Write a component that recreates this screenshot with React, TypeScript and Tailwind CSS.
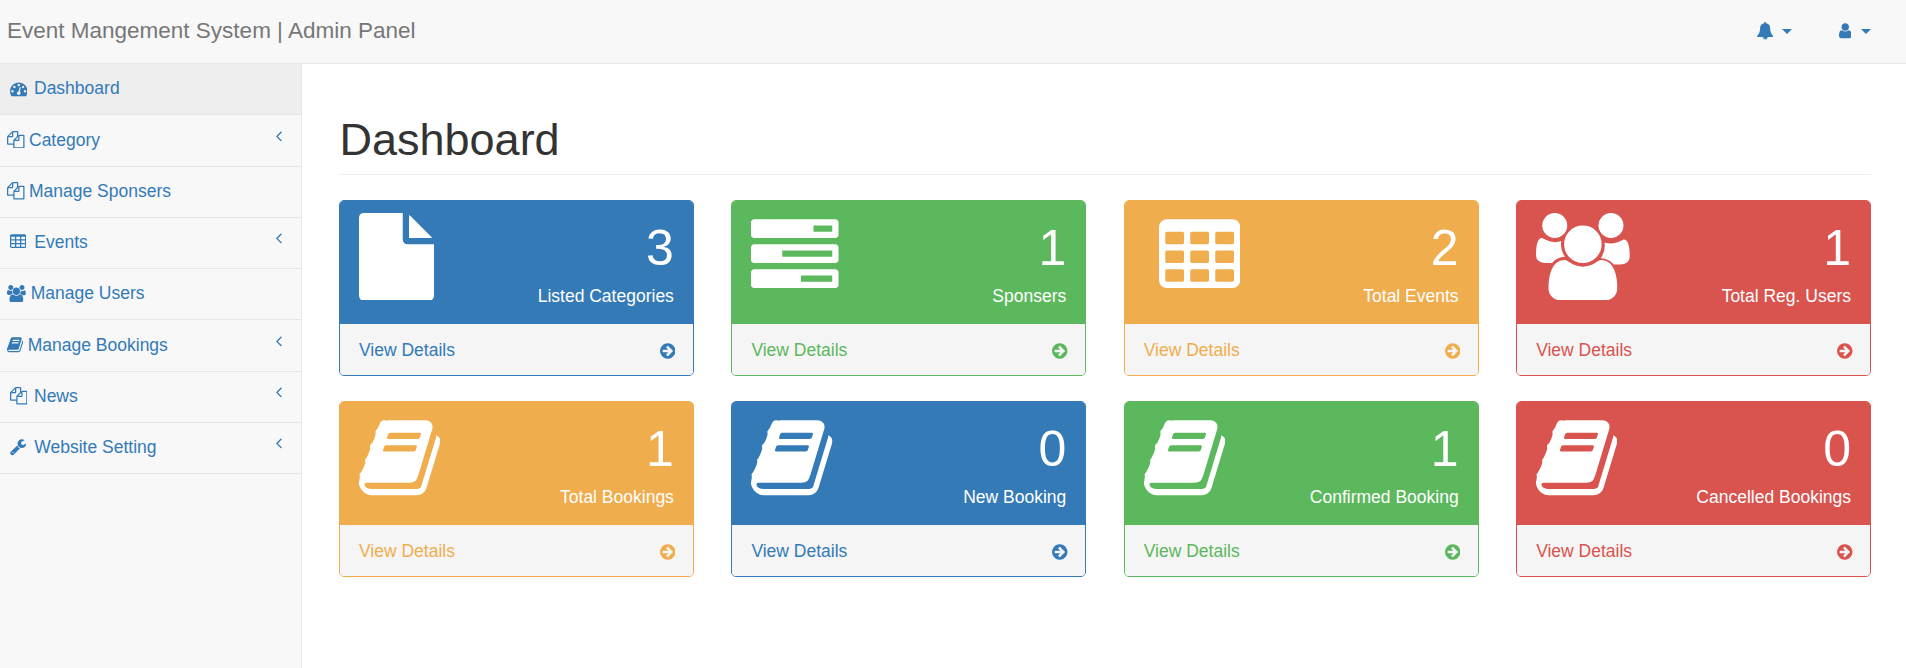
import type { ReactNode } from 'react'

// Font Awesome 4 glyphs, drawn inline because the icon packages only ship FA5+
const PATHS = {
  dashboard:
    'M384 1152q0-53-37.5-90.5t-90.5-37.5-90.5 37.5-37.5 90.5 37.5 90.5 90.5 37.5 90.5-37.5 37.5-90.5zm192-448q0-53-37.5-90.5t-90.5-37.5-90.5 37.5-37.5 90.5 37.5 90.5 90.5 37.5 90.5-37.5 37.5-90.5zm428 481l101-382q6-26-7.5-48.5t-38.5-29.5-48 6.5-30 39.5l-101 382q-60 5-107 43.5t-63 98.5q-20 77 20 146t117 89 146-20 89-117q16-60-6-117t-72-91zm660-33q0-53-37.5-90.5t-90.5-37.5-90.5 37.5-37.5 90.5 37.5 90.5 90.5 37.5 90.5-37.5 37.5-90.5zm-640-640q0-53-37.5-90.5t-90.5-37.5-90.5 37.5-37.5 90.5 37.5 90.5 90.5 37.5 90.5-37.5 37.5-90.5zm448 192q0-53-37.5-90.5t-90.5-37.5-90.5 37.5-37.5 90.5 37.5 90.5 90.5 37.5 90.5-37.5 37.5-90.5zm320 448q0 261-141 483-19 29-54 29h-1402q-35 0-54-29-141-221-141-483 0-182 71-348t191-286 286-191 348-71 348 71 286 191 191 286 71 348z',
  files:
    'M1696 384q40 0 68 28t28 68v1216q0 40-28 68t-68 28h-960q-40 0-68-28t-28-68v-288h-544q-40 0-68-28t-28-68v-672q0-40 20-88t48-76l408-408q28-28 76-48t88-20h416q40 0 68 28t28 68v328q68-40 128-40h416zm-544 213l-299 299h299v-299zm-640-384l-299 299h299v-299zm196 647l316-316v-416h-384v416q0 40-28 68t-68 28h-416v640h512v-256q0-40 20-92t48-80zm956 804v-1152h-384v416q0 40-28 68t-68 28h-416v640h896z',
  table:
    'M576 1376v-192q0-14-9-23t-23-9h-320q-14 0-23 9t-9 23v192q0 14 9 23t23 9h320q14 0 23-9t9-23zm0-384v-192q0-14-9-23t-23-9h-320q-14 0-23 9t-9 23v192q0 14 9 23t23 9h320q14 0 23-9t9-23zm512 384v-192q0-14-9-23t-23-9h-320q-14 0-23 9t-9 23v192q0 14 9 23t23 9h320q14 0 23-9t9-23zm-512-768v-192q0-14-9-23t-23-9h-320q-14 0-23 9t-9 23v192q0 14 9 23t23 9h320q14 0 23-9t9-23zm512 384v-192q0-14-9-23t-23-9h-320q-14 0-23 9t-9 23v192q0 14 9 23t23 9h320q14 0 23-9t9-23zm512 384v-192q0-14-9-23t-23-9h-320q-14 0-23 9t-9 23v192q0 14 9 23t23 9h320q14 0 23-9t9-23zm-512-768v-192q0-14-9-23t-23-9h-320q-14 0-23 9t-9 23v192q0 14 9 23t23 9h320q14 0 23-9t9-23zm512 384v-192q0-14-9-23t-23-9h-320q-14 0-23 9t-9 23v192q0 14 9 23t23 9h320q14 0 23-9t9-23zm0-384v-192q0-14-9-23t-23-9h-320q-14 0-23 9t-9 23v192q0 14 9 23t23 9h320q14 0 23-9t9-23zm128-320v1088q0 66-47 113t-113 47h-1344q-66 0-113-47t-47-113v-1088q0-66 47-113t113-47h1344q66 0 113 47t47 113z',
  users:
    'M593 896q-162 5-265 128h-134q-82 0-138-40.5t-56-118.5q0-353 124-353 6 0 43.5 21t97.5 42.5 119 21.5q67 0 133-23-5 37-5 66 0 139 81 256zm1071 637q0 120-73 189.5t-194 69.5h-874q-121 0-194-69.5t-73-189.5q0-53 3.5-103.5t14-109 26.5-108.5 43-97.5 62-81 85.5-53.5 111.5-20q10 0 43 21.5t73 48 107 48 135 21.5 135-21.5 107-48 73-48 43-21.5q61 0 111.5 20t85.5 53.5 62 81 43 97.5 26.5 108.5 14 109 3.5 103.5zm-1024-1277q0 106-75 181t-181 75-181-75-75-181 75-181 181-75 181 75 75 181zm704 384q0 159-112.5 271.5t-271.5 112.5-271.5-112.5-112.5-271.5 112.5-271.5 271.5-112.5 271.5 112.5 112.5 271.5zm576 254q0 78-56 118.5t-138 40.5h-134q-103-123-265-128 81-117 81-256 0-29-5-66 66 23 133 23 59 0 119-21.5t97.5-42.5 43.5-21q124 0 124 353zm-128-638q0 106-75 181t-181 75-181-75-75-181 75-181 181-75 181 75 75 181z',
  book:
    'M1703 478q40 57 18 129l-275 906q-19 64-76.5 107.5t-122.5 43.5h-923q-77 0-148.5-53.5t-99.5-131.5q-24-67-2-127 0-4 3-27t4-37q1-8-3-21.5t-3-19.5q2-11 8-21t16.5-23.5 16.5-23.5q23-38 45-91.5t30-91.5q3-10 .5-30t-.5-28q3-11 17-28t17-23q21-36 42-92t25-90q1-9-2.5-32t.5-28q4-13 22-30.5t22-22.5q19-26 42.5-84.5t27.5-96.5q1-8-3-25.5t-2-26.5q2-8 9-18t18-23 17-21q8-12 16.5-30.5t15-35 16-36 19.5-32 26.5-23.5 36-11.5 47.5 5.5l-1 3q38-9 51-9h761q74 0 114 56t18 130l-274 906q-36 119-71.5 153.5t-128.5 34.5h-869q-27 0-38 15-11 16-1 43 24 70 144 70h923q29 0 56-15.5t35-41.5l300-987q7-22 5-57 38 15 59 43zm-1064 2q-4 13 2 22.5t20 9.5h608q13 0 25.5-9.5t16.5-22.5l21-64q4-13-2-22.5t-20-9.5h-608q-13 0-25.5 9.5t-16.5 22.5zm-83 256q-4 13 2 22.5t20 9.5h608q13 0 25.5-9.5t16.5-22.5l21-64q4-13-2-22.5t-20-9.5h-608q-13 0-25.5 9.5t-16.5 22.5z',
  wrench:
    'M448 1472q0-26-19-45t-45-19-45 19-19 45 19 45 45 19 45-19 19-45zm644-420l-682 682q-37 37-90 37-52 0-91-37l-106-108q-38-36-38-90 0-53 38-91l681-681q39 98 114.5 173.5t173.5 114.5zm634-435q0 39-23 106-47 134-164.5 217.5t-258.5 83.5q-185 0-316.5-131.5t-131.5-316.5 131.5-316.5 316.5-131.5q58 0 121.5 16.5t107.5 46.5q16 11 16 28t-16 28l-293 169v224l193 107q5-3 79-48.5t135.5-81 70.5-35.5q15 0 23.5 10t8.5 25z',
  file: 'M1024 512v-472q22 14 36 28l408 408q14 14 28 36h-472zm-128 32q0 40 28 68t68 28h544v1056q0 40-28 68t-68 28h-1344q-40 0-68-28t-28-68v-1600q0-40 28-68t68-28h800v544z',
  tasks:
    'M1024 1408h640v-128h-640v128zm-384-512h1024v-128h-1024v128zm640-512h384v-128h-384v128zm512 832v256q0 26-19 45t-45 19h-1664q-26 0-45-19t-19-45v-256q0-26 19-45t45-19h1664q26 0 45 19t19 45zm0-512v256q0 26-19 45t-45 19h-1664q-26 0-45-19t-19-45v-256q0-26 19-45t45-19h1664q26 0 45 19t19 45zm0-512v256q0 26-19 45t-45 19h-1664q-26 0-45-19t-19-45v-256q0-26 19-45t45-19h1664q26 0 45 19t19 45z',
  arrow:
    'M1285 896q0-27-18-45l-91-91-362-362q-18-18-45-18t-45 18l-91 91q-18 18-18 45t18 45l189 189h-502q-26 0-45 19t-19 45v128q0 26 19 45t45 19h502l-189 189q-19 19-19 45t19 45l91 91q18 18 45 18t45-18l362-362 91-91q18-18 18-45zm251 0q0 209-103 385.5t-279.5 279.5-385.5 103-385.5-103-279.5-279.5-103-385.5 103-385.5 279.5-279.5 385.5-103 385.5 103 279.5 279.5 103 385.5z',
  angle:
    'M1203 544q0 13-10 23l-393 393 393 393q10 10 10 23t-10 23l-50 50q-10 10-23 10t-23-10l-466-466q-10-10-10-23t10-23l466-466q10-10 23-10t23 10l50 50q10 10 10 23z',
  bell: 'M912 1696q0-16-16-16-59 0-101.5-42.5t-42.5-101.5q0-16-16-16t-16 16q0 73 51.5 124.5t124.5 51.5q16 0 16-16zm816-288q0 52-38 90t-90 38h-448q0 106-75 181t-181 75-181-75-75-181h-448q-52 0-90-38t-38-90q50-42 91-88t85-119.5 74.5-158.5 50-206 19.5-260q0-152 117-282.5t307-158.5q-8-19-8-39 0-40 28-68t68-28 68 28 28 68q0 20-8 39 190 28 307 158.5t117 282.5q0 139 19.5 260t50 206 74.5 158.5 85 119.5 91 88z',
  user: 'M1536 1399q0 109-62.5 187t-150.5 78h-854q-88 0-150.5-78t-62.5-187q0-85 8.5-160.5t31.5-152 58.5-131 94-89 134.5-34.5q131 128 313 128t313-128q76 0 134.5 34.5t94 89 58.5 131 31.5 152 8.5 160.5zm-256-887q0 159-112.5 271.5t-271.5 112.5-271.5-112.5-112.5-271.5 112.5-271.5 271.5-112.5 271.5 112.5 112.5 271.5z',
}

type IconName = keyof typeof PATHS

const VIEWBOX: Record<IconName, string> = {
  dashboard: '0 0 1792 1792',
  files: '0 0 1792 1792',
  table: '64 0 1664 1792',
  users: '0 0 1920 1792',
  book: '64 0 1664 1792',
  wrench: '64 0 1664 1792',
  file: '0 0 1536 1792',
  tasks: '0 0 1792 1792',
  arrow: '0 0 1536 1792',
  angle: '0 0 1792 1792',
  bell: '64 0 1664 1792',
  user: '256 0 1280 1792',
}

function Fa({ name, className }: { name: IconName; className: string }) {
  return (
    <svg viewBox={VIEWBOX[name]} className={`shrink-0 fill-current ${className}`}>
      <path d={PATHS[name]} />
    </svg>
  )
}

const TONES = {
  blue: { border: 'border-[#337ab7]', bg: 'bg-[#337ab7]', text: 'text-[#337ab7]' },
  green: { border: 'border-[#5cb85c]', bg: 'bg-[#5cb85c]', text: 'text-[#5cb85c]' },
  yellow: { border: 'border-[#f0ad4e]', bg: 'bg-[#f0ad4e]', text: 'text-[#f0ad4e]' },
  red: { border: 'border-[#d9534f]', bg: 'bg-[#d9534f]', text: 'text-[#d9534f]' },
}

type MenuItem = {
  label: string
  icon: IconName
  iconSize: string
  spacing: string
  arrow?: boolean
  active?: boolean
}

const MENU: MenuItem[] = [
  { label: 'Dashboard', icon: 'dashboard', iconSize: 'h-[17.5px] w-[17.5px]', spacing: 'pl-[9.5px] gap-[7px]', active: true },
  { label: 'Category', icon: 'files', iconSize: 'h-[17.5px] w-[17.5px]', spacing: 'pl-[7px] gap-[4.5px]', arrow: true },
  { label: 'Manage Sponsers', icon: 'files', iconSize: 'h-[17.5px] w-[17.5px]', spacing: 'pl-[7px] gap-[4.5px]' },
  { label: 'Events', icon: 'table', iconSize: 'h-[17.5px] w-[16.25px]', spacing: 'pl-[10px] gap-[8px]', arrow: true },
  { label: 'Manage Users', icon: 'users', iconSize: 'h-[17.5px] w-[18.75px]', spacing: 'pl-[7px] gap-[5px]' },
  { label: 'Manage Bookings', icon: 'book', iconSize: 'h-[17.5px] w-[16.25px]', spacing: 'pl-[7px] gap-[4.5px]', arrow: true },
  { label: 'News', icon: 'files', iconSize: 'h-[17.5px] w-[17.5px]', spacing: 'pl-[9.5px] gap-[7px]', arrow: true },
  { label: 'Website Setting', icon: 'wrench', iconSize: 'h-[17.5px] w-[16.25px]', spacing: 'pl-[10px] gap-[8px]', arrow: true },
]

type Card = {
  tone: keyof typeof TONES
  count: number
  label: string
  icon: ReactNode
}

const bookIcon = <Fa name="book" className="h-[87.5px] w-[81.25px]" />

const CARDS: Card[] = [
  { tone: 'blue', count: 3, label: 'Listed Categories', icon: <Fa name="file" className="h-[87.5px] w-[75px]" /> },
  { tone: 'green', count: 1, label: 'Sponsers', icon: <Fa name="tasks" className="h-[87.5px] w-[87.5px]" /> },
  { tone: 'yellow', count: 2, label: 'Total Events', icon: <Fa name="table" className="ml-[15px] h-[87.5px] w-[81.25px]" /> },
  { tone: 'red', count: 1, label: 'Total Reg. Users', icon: <Fa name="users" className="h-[87.5px] w-[93.75px]" /> },
  { tone: 'yellow', count: 1, label: 'Total Bookings', icon: bookIcon },
  { tone: 'blue', count: 0, label: 'New Booking', icon: bookIcon },
  { tone: 'green', count: 1, label: 'Confirmed Booking', icon: bookIcon },
  { tone: 'red', count: 0, label: 'Cancelled Bookings', icon: bookIcon },
]

function StatCard({ card }: { card: Card }) {
  const tone = TONES[card.tone]
  return (
    <div className={`h-[176px] overflow-hidden rounded-[5px] border ${tone.border}`}>
      <div className={`flex h-[123px] justify-between px-[19px] pt-[11.5px] text-white ${tone.bg}`}>
        {card.icon}
        <div className="text-right">
          <div className="text-[50px] leading-[71.5px]">{card.count}</div>
          <div className="leading-[25px]">{card.label}</div>
        </div>
      </div>
      <div className={`flex h-[51px] items-center justify-between bg-[#f5f5f5] pl-[19px] pr-[17.5px] pt-[2px] ${tone.text}`}>
        <span>View Details</span>
        <Fa name="arrow" className="h-[18px] w-[15.5px]" />
      </div>
    </div>
  )
}

export default function App() {
  return (
    <div className="flex min-h-screen flex-col bg-white font-['Liberation_Sans',Arial,sans-serif] text-[17.5px] text-[#337ab7]">
      <nav className="flex h-[64px] shrink-0 items-center border-b border-[#e7e7e7] bg-[#f8f8f8] pb-px pl-[7px] pr-[35px]">
        <span className="text-[22.5px] text-[#777777]">Event Mangement System | Admin Panel</span>
        <Fa name="bell" className="ml-auto h-[17.5px] w-[16.25px]" />
        <span className="ml-[8px] h-0 w-0 border-x-[5px] border-t-[5px] border-x-transparent border-t-[#337ab7]" />
        <Fa name="user" className="ml-[47px] h-[17.5px] w-[12.5px]" />
        <span className="ml-[10px] h-0 w-0 border-x-[5px] border-t-[5px] border-x-transparent border-t-[#337ab7]" />
      </nav>

      <div className="flex flex-1">
        <aside className="w-[302px] shrink-0 border-r border-[#e7e7e7] bg-[#f8f8f8]">
          {MENU.map((item) => (
            <div
              key={item.label}
              className={`flex h-[51.25px] items-center border-b border-[#e7e7e7] pb-[1.5px] ${item.spacing} ${
                item.active ? 'bg-[#eeeeee]' : ''
              }`}
            >
              <Fa name={item.icon} className={item.iconSize} />
              <span>{item.label}</span>
              {item.arrow && <Fa name="angle" className="mb-[8px] ml-auto mr-[14px] h-[17.5px] w-[17.5px]" />}
            </div>
          ))}
        </aside>

        <main className="min-w-0 flex-1 pl-[37px] pr-[35px]">
          <h1 className="mb-[25px] mt-[51px] border-b border-[#eeeeee] pb-[9.5px] pl-[0.5px] text-[45px] leading-[49.5px] text-[#333333]">
            Dashboard
          </h1>
          <div className="grid grid-cols-4 gap-x-[37.5px] gap-y-[25px]">
            {CARDS.map((card) => (
              <StatCard key={card.label} card={card} />
            ))}
          </div>
        </main>
      </div>
    </div>
  )
}
